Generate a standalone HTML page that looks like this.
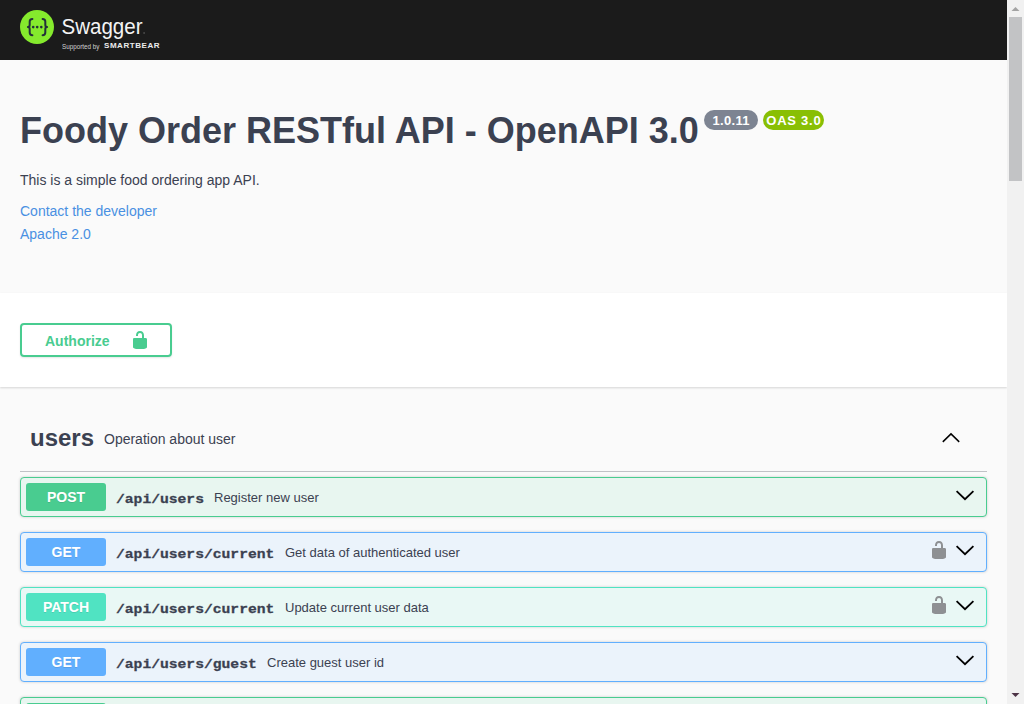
<!DOCTYPE html>
<html><head><meta charset="utf-8">
<style>
*{box-sizing:border-box}
html,body{margin:0;padding:0}
body{background:#fafafa;width:1024px;height:704px;overflow:hidden;position:relative;font-family:"Liberation Sans",sans-serif;color:#3b4151}
#page{position:absolute;left:0;top:0;width:1007px;height:704px;overflow:hidden}
.topbar{position:absolute;left:0;top:0;width:1007px;height:60px;background:#1b1b1b}
.title{position:absolute;left:20px;top:110px;margin:0;font-size:36px;font-weight:700;line-height:41px;white-space:nowrap;color:#3b4151}
.badge{position:absolute;top:110px;height:20px;border-radius:10px;background:#7d8492;color:#fff;font-weight:700;font-size:13px;line-height:22px;text-align:center;letter-spacing:0.75px;text-indent:0.75px}
.desc{position:absolute;left:20px;font-size:14px;line-height:16px;white-space:nowrap}
.link{color:#4990e2}
.scheme{position:absolute;left:0;top:293px;width:1007px;height:94px;background:#fff;box-shadow:0 1px 2px 0 rgba(0,0,0,.15)}
.authbtn{position:absolute;left:20px;top:30px;width:152px;height:34px;border:2px solid #49cc90;border-radius:4px;box-shadow:0 1px 2px rgba(0,0,0,.1)}
.authbtn span{position:absolute;left:23px;top:8px;font-size:14px;font-weight:700;color:#49cc90;line-height:16px}
.tag{position:absolute;left:20px;top:407px;width:967px;height:65px;border-bottom:1px solid rgba(59,65,81,.3)}
.tag .name{position:absolute;left:10px;font-size:24px;font-weight:700;line-height:28px;top:17px}
.tag small{position:absolute;left:84px;top:24px;font-size:14px;line-height:16px;font-weight:400}
.op{position:absolute;left:20px;width:967px;height:40px;border:1px solid #000;border-radius:4px;box-shadow:0 0 3px rgba(0,0,0,.19)}
.op .m{position:absolute;left:5px;top:5px;width:80px;height:28px;border-radius:3px;color:#fff;font-size:14px;font-weight:700;text-align:center;line-height:28px;text-shadow:0 1px 0 rgba(0,0,0,.1)}
.op .p{position:absolute;left:95px;top:12px;font-family:"Liberation Mono",monospace;font-weight:700;font-size:14.67px;line-height:18px;white-space:nowrap;-webkit-text-stroke:0.3px #3b4151;transform:scaleY(0.9);transform-origin:0 13.6px}
.op .d{position:absolute;top:12px;font-family:"Liberation Sans",sans-serif;font-weight:400;font-size:13px;line-height:16px;white-space:nowrap}
.op svg{position:absolute}
.post{background:#e8f6f0;border-color:#49cc90}
.post .m{background:#49cc90}
.get{background:#ebf3fb;border-color:#61affe}
.get .m{background:#61affe}
.patch{background:#e9f8f5;border-color:#50e3c2}
.patch .m{background:#50e3c2}
.sb{position:absolute;left:1007px;top:0;width:17px;height:704px;background:#f1f1f1}
.thumb{position:absolute;left:2px;top:17px;width:13px;height:164px;background:#c2c3c5}
</style></head><body>
<div id="page">
  <div class="topbar">
    <svg width="200" height="60" viewBox="0 0 200 60" style="position:absolute;left:0;top:0">
      <circle cx="37" cy="27" r="17" fill="#85ea2d"/>
      <g fill="none" stroke="#23313a" stroke-width="2" stroke-linecap="round" stroke-linejoin="round">
        <path d="M32.4 18.9 C30.2 18.9 29.7 19.9 29.7 21.6 L29.7 24.8 C29.7 26.2 29 27 27.9 27 C29 27 29.7 27.8 29.7 29.2 L29.7 32.6 C29.7 34.3 30.2 35.3 32.4 35.3"/>
        <path d="M42.6 18.9 C44.8 18.9 45.3 19.9 45.3 21.6 L45.3 24.8 C45.3 26.2 46 27 47.1 27 C46 27 45.3 27.8 45.3 29.2 L45.3 32.6 C45.3 34.3 44.8 35.3 42.6 35.3"/>
      </g>
      <g fill="#23313a"><circle cx="33.2" cy="27.1" r="1.3"/><circle cx="37.2" cy="27.1" r="1.3"/><circle cx="41.3" cy="27.1" r="1.3"/></g>
      <text x="61.5" y="34" font-family="Liberation Sans" font-size="21.5" fill="#f4f4f4" transform="translate(61.5 0) scale(0.955 1) translate(-61.5 0)">Swagger</text>
      <rect x="143.5" y="32.5" width="1.2" height="1" fill="#888"/>
      <text x="62" y="48.5" font-family="Liberation Sans" font-size="6.3" fill="#d0d0d0">Supported by</text>
      <text x="104" y="48.4" font-family="Liberation Sans" font-weight="700" font-size="8" letter-spacing="0.55" fill="#ececec">SMARTBEAR</text>
    </svg>
  </div>
  <h2 class="title">Foody Order RESTful API - OpenAPI 3.0</h2>
  <div class="badge" style="left:704px;width:54px;letter-spacing:0.35px;text-indent:0.35px">1.0.11</div>
  <div class="badge" style="left:763px;width:61px;background:#89bf04">OAS 3.0</div>
  <div class="desc" style="top:172px">This is a simple food ordering app API.</div>
  <div class="desc link" style="top:203px">Contact the developer</div>
  <div class="desc link" style="top:226px">Apache 2.0</div>
  <div class="scheme">
    <div class="authbtn"><span>Authorize</span>
      <svg width="20" height="20" viewBox="0 0 20 20" style="position:absolute;left:108px;top:5px"><path fill="#49cc90" d="M15.8 8H14V5.6C14 2.703 12.665 1 10 1 7.334 1 6 2.703 6 5.6V6h2v-.801C8 3.754 8.797 3 10 3c1.203 0 2 .754 2 2.199V8H4c-.553 0-1 .646-1 1.199V17c0 .549.428 1.139.951 1.307l1.197.387C5.672 18.861 6.55 19 7.1 19h5.8c.549 0 1.428-.139 1.951-.307l1.196-.387c.524-.167.953-.757.953-1.306V9.199C17 8.646 16.352 8 15.8 8z"/></svg>
    </div>
  </div>
  <div class="tag"><span class="name">users</span><small>Operation about user</small>
    <svg width="40" height="30" viewBox="0 0 40 30" style="position:absolute;left:912px;top:17px"><polyline points="10.8,17.9 19,9.9 27.2,17.9" fill="none" stroke="#000" stroke-width="1.5"/></svg>
  </div>

  <div class="op post" style="top:477px"><div class="m">POST</div><div class="p">/api/users</div><div class="d" style="left:193px">Register new user</div>
    <svg width="30" height="20" viewBox="0 0 30 20" style="left:930px;top:8px"><polyline points="5.6,5.2 14,13.2 22.4,5.2" fill="none" stroke="#000" stroke-width="1.8"/></svg></div>

  <div class="op get" style="top:532px"><div class="m">GET</div><div class="p">/api/users/current</div><div class="d" style="left:264px">Get data of authenticated user</div>
    <svg class="lk" width="20" height="20" viewBox="0 0 20 20" style="left:908px;top:7px"><path fill="#8e9093" d="M15.8 8H14V5.6C14 2.703 12.665 1 10 1 7.334 1 6 2.703 6 5.6V6h2v-.801C8 3.754 8.797 3 10 3c1.203 0 2 .754 2 2.199V8H4c-.553 0-1 .646-1 1.199V17c0 .549.428 1.139.951 1.307l1.197.387C5.672 18.861 6.55 19 7.1 19h5.8c.549 0 1.428-.139 1.951-.307l1.196-.387c.524-.167.953-.757.953-1.306V9.199C17 8.646 16.352 8 15.8 8z"/></svg>
    <svg width="30" height="20" viewBox="0 0 30 20" style="left:930px;top:8px"><polyline points="5.6,5.2 14,13.2 22.4,5.2" fill="none" stroke="#000" stroke-width="1.8"/></svg></div>

  <div class="op patch" style="top:587px"><div class="m">PATCH</div><div class="p">/api/users/current</div><div class="d" style="left:264px">Update current user data</div>
    <svg class="lk" width="20" height="20" viewBox="0 0 20 20" style="left:908px;top:7px"><path fill="#8e9093" d="M15.8 8H14V5.6C14 2.703 12.665 1 10 1 7.334 1 6 2.703 6 5.6V6h2v-.801C8 3.754 8.797 3 10 3c1.203 0 2 .754 2 2.199V8H4c-.553 0-1 .646-1 1.199V17c0 .549.428 1.139.951 1.307l1.197.387C5.672 18.861 6.55 19 7.1 19h5.8c.549 0 1.428-.139 1.951-.307l1.196-.387c.524-.167.953-.757.953-1.306V9.199C17 8.646 16.352 8 15.8 8z"/></svg>
    <svg width="30" height="20" viewBox="0 0 30 20" style="left:930px;top:8px"><polyline points="5.6,5.2 14,13.2 22.4,5.2" fill="none" stroke="#000" stroke-width="1.8"/></svg></div>

  <div class="op get" style="top:642px"><div class="m">GET</div><div class="p">/api/users/guest</div><div class="d" style="left:246px">Create guest user id</div>
    <svg width="30" height="20" viewBox="0 0 30 20" style="left:930px;top:8px"><polyline points="5.6,5.2 14,13.2 22.4,5.2" fill="none" stroke="#000" stroke-width="1.8"/></svg></div>

  <div class="op post" style="top:697px"><div class="m">POST</div></div>
</div>
<div class="sb"><div class="thumb"></div>
  <svg width="17" height="704" viewBox="0 0 17 704" style="position:absolute;left:0;top:0">
    <polygon points="4.5,11 8.5,7 12.5,11" fill="#a3a3a3"/>
    <polygon points="4.5,693 12.5,693 8.5,697" fill="#4d3346"/>
  </svg>
</div>
</body></html>
